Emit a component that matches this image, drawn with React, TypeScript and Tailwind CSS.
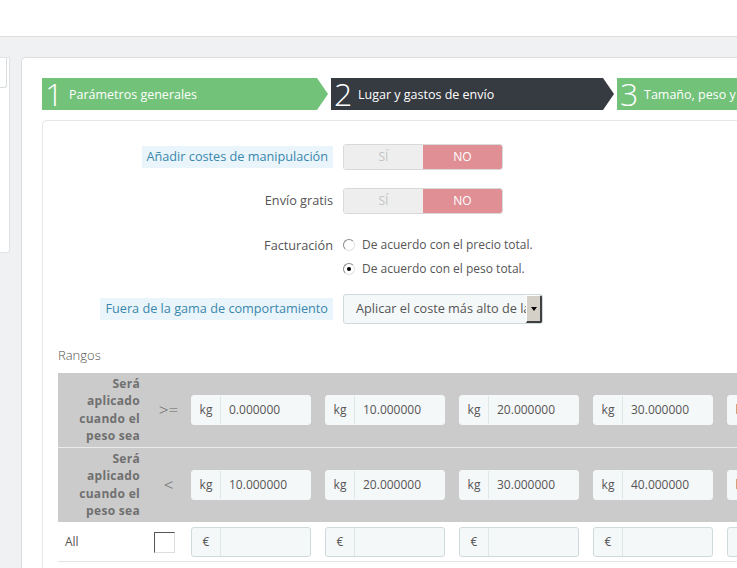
import React from 'react';

const steps = [
  { n: '1', label: 'Parámetros generales', bg: 'bg-[#72c279]', w: 'w-[286px]' },
  { n: '2', label: 'Lugar y gastos de envío', bg: 'bg-[#363a41]', w: 'w-[283px]' },
  { n: '3', label: 'Tamaño, peso y grupo de acceso', bg: 'bg-[#72c279]', w: 'w-[286px]' },
];

const fromValues = ['0.000000', '10.000000', '20.000000', '30.000000', '40.000000'];
const toValues = ['10.000000', '20.000000', '30.000000', '40.000000', '50.000000'];

function Switch() {
  return (
    <div className="flex h-[26px] w-[160px] overflow-hidden rounded-[3px] border border-[#d9d9d9] text-[12px]">
      <div className="flex flex-1 items-center justify-center bg-[#eeeeee] text-[#c4c4c4]">SÍ</div>
      <div className="flex flex-1 items-center justify-center bg-[#e08f95] text-white">NO</div>
    </div>
  );
}

function Radio({ checked }: { checked?: boolean }) {
  return (
    <span className="flex h-[12px] w-[12px] items-center justify-center rounded-full border border-t-[#8a8a8a] border-l-[#8a8a8a] border-r-[#e2e2e2] border-b-[#e2e2e2] bg-white">
      {checked && <span className="h-[4px] w-[4px] rounded-full bg-black" />}
    </span>
  );
}

function Label({ text, tip }: { text: string; tip?: boolean }) {
  return (
    <div className="flex w-[290px] justify-end text-[12.7px]">
      <span className={tip ? 'bg-[#e9f5fa] px-[5px] py-[1px] text-[#3a87ad]' : 'text-[#555]'}>{text}</span>
    </div>
  );
}

function Group({ unit, value, plain }: { unit: string; value?: string; plain?: boolean }) {
  return (
    <div
      className={`flex h-[30px] w-[120px] shrink-0 overflow-hidden rounded-[3px] bg-[#f5f8f9] text-[12px] text-[#555] ${
        plain ? 'border border-[#cfdadd]' : 'border border-[#f5f8f9]'
      }`}
    >
      <div className="flex w-[29px] shrink-0 items-center justify-center border-r border-[#dfe6e8]">{unit}</div>
      <div className="flex flex-1 items-center pl-[8px]">{value}</div>
    </div>
  );
}

function RangeLabel() {
  return (
    <div className="w-[88px] shrink-0 pr-[6px] text-right text-[12px] leading-[17.5px] font-bold tracking-[0.3px] text-[#707070]">
      Será aplicado cuando el peso sea
    </div>
  );
}

export default function App() {
  return (
    <div className="h-[568px] w-[737px] overflow-hidden bg-[#eff1f2] text-[12px] text-[#555] [font-family:'Open_Sans',sans-serif]">
      <div className="h-[37px] border-b border-[#dddddd] bg-white" />

      <div className="flex items-start pt-[20px]">
        {/* Left column */}
        <div className="mr-[11px] h-[196px] w-[10px] shrink-0 rounded-br-[4px] border border-l-0 border-[#dfe3e5] bg-white">
          <div className="h-[30px] w-[7px] rounded-br-[3px] border-b border-r border-[#d8dcde]" />
        </div>

        {/* Main card */}
        <div className="min-w-[740px] flex-1 rounded-tl-[5px] border border-r-0 border-[#dcdfe1] bg-white pt-[20px] pl-[20px]">
          {/* Wizard steps */}
          <div className="flex gap-[3px]">
            {steps.map((s) => (
              <div
                key={s.n}
                className={`flex h-[32px] shrink-0 items-center text-white ${s.bg} ${s.w} [clip-path:polygon(0_0,calc(100%-11px)_0,100%_50%,calc(100%-11px)_100%,0_100%)]`}
              >
                <span className="ml-[3px] w-[24px] text-[32px] leading-none font-light">{s.n}</span>
                <span className="mt-[2px] text-[12.5px] whitespace-nowrap">{s.label}</span>
              </div>
            ))}
          </div>

          {/* Form panel */}
          <div className="mt-[10px] rounded-tl-[5px] border border-r-0 border-[#e6e6e6] bg-white pb-[10px]">
            <div className="mt-[23px] flex items-center gap-[10px]">
              <Label text="Añadir costes de manipulación" tip />
              <Switch />
            </div>
            <div className="mt-[18px] flex items-center gap-[10px]">
              <Label text="Envío gratis" />
              <Switch />
            </div>
            <div className="mt-[22px] flex items-start gap-[10px]">
              <div className="flex w-[290px] justify-end text-[12.7px] leading-[18px]">Facturación</div>
              <div className="flex flex-col gap-[6px]">
                <label className="flex h-[18px] items-center gap-[7px]">
                  <Radio />
                  <span>De acuerdo con el precio total.</span>
                </label>
                <label className="flex h-[18px] items-center gap-[7px]">
                  <Radio checked />
                  <span>De acuerdo con el peso total.</span>
                </label>
              </div>
            </div>
            <div className="mt-[16px] flex items-center gap-[10px]">
              <Label text="Fuera de la gama de comportamiento" tip />
              <div className="flex h-[30px] w-[200px] items-center overflow-hidden rounded-[3px] border border-[#cfdadd] bg-[#f5f8f9]">
                <span className="flex-1 overflow-hidden pl-[12px] text-[12.7px] whitespace-nowrap">Aplicar el coste más alto de la</span>
                <span className="flex h-[28px] w-[16px] shrink-0 items-center justify-center border-t border-l border-b-2 border-r-2 border-t-white border-l-white border-b-[#404040] border-r-[#404040] bg-[#d4d0c8]">
                  <span className="h-0 w-0 border-x-[3.5px] border-t-[4px] border-x-transparent border-t-black" />
                </span>
              </div>
            </div>

            {/* Ranges */}
            <div className="mt-[22px] ml-[15px] text-[13px] font-light text-[#555]">Rangos</div>
            <div className="mt-[7px] ml-[15px]">
              <div className="flex h-[74px] items-center bg-[#cbcbcb]">
                <RangeLabel />
                <div className="w-[45px] shrink-0 text-center text-[17px] font-light text-[#666]">&gt;=</div>
                <div className="flex gap-[14px]">
                  {fromValues.map((v) => (
                    <Group key={v} unit="kg" value={v} />
                  ))}
                </div>
              </div>
              <div className="h-px bg-[#ebebeb]" />
              <div className="flex h-[74px] items-center bg-[#cbcbcb]">
                <RangeLabel />
                <div className="w-[45px] shrink-0 text-center text-[17px] font-light text-[#666]">&lt;</div>
                <div className="flex gap-[14px]">
                  {toValues.map((v) => (
                    <Group key={v} unit="kg" value={v} />
                  ))}
                </div>
              </div>
              <div className="flex h-[40px] items-center border-b border-[#e4e4e4] pt-[2px]">
                <div className="w-[96px] shrink-0 pl-[7px]">All</div>
                <div className="w-[37px] shrink-0">
                  <div className="h-[21px] w-[21px] border border-t-[#555] border-l-[#555] border-r-[#ddd] border-b-[#ddd] bg-white" />
                </div>
                <div className="flex gap-[14px]">
                  {fromValues.map((v) => (
                    <Group key={v} unit="€" plain />
                  ))}
                </div>
              </div>
            </div>
          </div>
        </div>
      </div>
    </div>
  );
}
